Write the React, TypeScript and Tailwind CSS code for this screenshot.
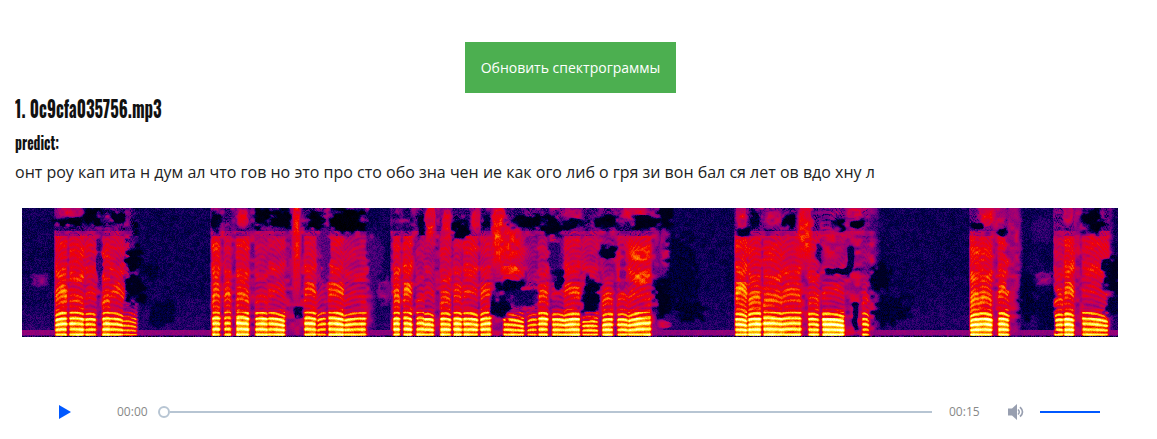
import { useLayoutEffect, useRef } from 'react';

const WIDTH = 1096;
const HEIGHT = 129;

// Voiced slices: start, end, low / mid / high band energy, pitch start, pitch end
type Voice = [number, number, number, number, number, number, number];
const VOICES: Voice[] = [
  [33, 44, 0.8, 0.64, 0.58, 4.8, 5.5],
  [47, 61, 0.78, 0.57, 0.58, 5.6, 5.2],
  [63, 73, 0.74, 0.52, 0.52, 5.1, 5],
  [80, 88, 0.78, 0.6, 0.56, 5.3, 5.5],
  [88, 101, 0.74, 0.55, 0.52, 5.5, 4.6],
  [101, 114, 0.64, 0.34, 0.3, 4.6, 3.8],
  [190, 197, 0.8, 0.64, 0.6, 5.5, 5.5],
  [202, 208, 0.75, 0.6, 0.54, 5.6, 5.7],
  [214, 226, 0.82, 0.6, 0.57, 5.9, 5.4],
  [233, 245, 0.8, 0.5, 0.48, 5.4, 5.3],
  [246, 262, 0.78, 0.52, 0.5, 5.6, 4.6],
  [282, 293, 0.79, 0.58, 0.54, 5.7, 5.3],
  [295, 303, 0.69, 0.42, 0.38, 4.7, 5.5],
  [306, 321, 0.8, 0.59, 0.53, 5.7, 5],
  [322, 343, 0.74, 0.48, 0.48, 4.8, 5.5],
  [371, 377, 0.79, 0.64, 0.57, 5.4, 5.4],
  [381, 389, 0.79, 0.62, 0.57, 5.7, 5.2],
  [394, 402, 0.77, 0.5, 0.46, 5.6, 5.6],
  [402, 411, 0.77, 0.48, 0.46, 5.2, 4.8],
  [418, 428, 0.79, 0.58, 0.53, 5.3, 5],
  [431, 439, 0.79, 0.56, 0.5, 5.5, 5.2],
  [441, 455, 0.78, 0.54, 0.55, 5.4, 4.9],
  [458, 468, 0.79, 0.59, 0.51, 5, 5.7],
  [481, 501, 0.73, 0.3, 0.5, 5.2, 4.2],
  [505, 514, 0.67, 0.3, 0.4, 4.5, 5],
  [516, 525, 0.78, 0.58, 0.48, 5.4, 5.2],
  [530, 542, 0.76, 0.46, 0.34, 5.1, 4.7],
  [542, 557, 0.79, 0.57, 0.52, 4.8, 5.2],
  [560, 575, 0.72, 0.2, 0.48, 4.3, 4.3],
  [580, 590, 0.78, 0.56, 0.42, 4.8, 5.1],
  [595, 605, 0.75, 0.52, 0.52, 5, 4.8],
  [606, 628, 0.79, 0.53, 0.58, 4.6, 6],
  [713, 724, 0.82, 0.68, 0.59, 5.2, 4.6],
  [726, 738, 0.84, 0.63, 0.57, 5, 5.3],
  [741, 760, 0.82, 0.6, 0.56, 5.8, 5.2],
  [760, 778, 0.79, 0.58, 0.54, 5.4, 5.6],
  [786, 796, 0.78, 0.57, 0.53, 5.2, 4.9],
  [800, 821, 0.85, 0.51, 0.44, 5.2, 4.6],
  [840, 846, 0.72, 0.53, 0.4, 5.3, 4.8],
  [948, 957, 0.83, 0.66, 0.6, 4.6, 5.1],
  [957, 969, 0.83, 0.63, 0.59, 5.3, 4.9],
  [976, 986, 0.8, 0.6, 0.57, 5.4, 4.8],
  [1032, 1040, 0.76, 0.58, 0.5, 4.6, 5],
  [1042, 1051, 0.82, 0.63, 0.59, 5.2, 4.8],
  [1060, 1085, 0.75, 0.5, 0.54, 5.6, 4.4],
];

// Background energy of each phrase: start, end, level, fade-out length
const PHRASES = [
  [33, 104, 0.41, 12],
  [189, 344, 0.4, 12],
  [369, 631, 0.39, 16],
  [713, 848, 0.42, 12],
  [948, 990, 0.44, 12],
  [1032, 1085, 0.42, 8],
];

// Soft patches: centre x, centre y, radius x, radius y, target level
const PATCHES = [
  [48, 3, 14, 6, 0.47], [47, 13, 13, 4, 0.02], [70, 8, 9, 9, 0.02], [95, 9, 7, 7, 0.04],
  [77, 58, 3, 24, 0.2], [112, 52, 8, 14, 0.02], [113, 81, 9, 14, 0.03], [17, 72, 8, 7, 0.32],
  [125, 61, 10, 9, 0.08], [138, 105, 12, 12, 0.08],
  [194, 14, 5, 8, 0.04], [240, 9, 7, 11, 0.01], [260, 10, 9, 10, 0.01], [294, 13, 9, 8, 0.01],
  [324, 10, 18, 12, 0], [352, 12, 7, 16, 0.12], [275, 103, 4, 6, 0.08], [220, 9, 6, 9, 0.56],
  [274, 22, 4, 64, 0.57], [303, 45, 5, 25, 0.26], [361, 82, 7, 12, 0.38], [353, 52, 8, 25, 0.23],
  [399, 19, 4, 10, 0.05], [408, 12, 5, 19, 0.6], [424, 16, 5, 18, 0.55], [439, 21, 9, 9, 0.02],
  [453, 12, 5, 12, 0.54], [464, 14, 4, 7, 0.06], [476, 26, 7, 36, 0.61], [489, 34, 10, 22, 0.56],
  [489, 61, 10, 5, 0.64], [505, 13, 15, 6, 0.02], [529, 16, 10, 10, 0.02], [550, 15, 8, 5, 0.03],
  [488, 77, 15, 6, 0.05], [478, 99, 10, 10, 0.05], [500, 89, 15, 8, 0.14], [532, 48, 7, 16, 0.19],
  [537, 71, 5, 11, 0.08], [550, 8, 10, 8, 0.48], [549, 15, 11, 5, 0.04], [583, 14, 12, 8, 0.02],
  [568, 89, 9, 17, 0.04], [586, 43, 8, 6, 0.03], [600, 65, 3, 20, 0.35],
  [612, 5, 14, 7, 0.53], [627, 14, 15, 7, 0.02], [643, 8, 6, 16, 0.03], [643, 42, 5, 21, 0.45],
  [642, 88, 9, 17, 0.03], [642, 116, 6, 4, 0.5], [617, 47, 10, 7, 0.65], [619, 70, 8, 7, 0.65],
  [660, 65, 14, 38, 0.08], [668, 102, 16, 9, 0.06],
  [719, 9, 5, 12, 0.53], [722, 23, 6, 4, 0.04], [732, 11, 4, 8, 0.06], [751, 10, 9, 8, 0.48],
  [767, 12, 7, 7, 0.02], [782, 25, 8, 29, 0.59], [797, 44, 4, 9, 0.13], [816, 18, 7, 6, 0.01],
  [834, 16, 7, 5, 0.01], [832, 4, 8, 5, 0.52], [809, 36, 9, 18, 0.48], [818, 63, 16, 3, 0.05],
  [828, 52, 3, 13, 0.09], [833, 108, 3, 17, 0.08], [858, 70, 9, 14, 0.05], [870, 101, 20, 14, 0.07],
  [965, 8, 8, 10, 0.56], [954, 17, 6, 3, 0.04], [982, 23, 6, 4, 0.04], [978, 7, 5, 11, 0.47],
  [991, 45, 7, 51, 0.43], [1020, 70, 10, 7, 0.36], [1020, 20, 10, 12, 0.2], [1005, 90, 8, 26, 0.08],
  [1023, 105, 9, 22, 0.1], [1046, 6, 5, 10, 0.52], [1056, 11, 5, 10, 0.42], [1070, 10, 10, 13, 0.02],
  [1088, 67, 8, 17, 0.04], [1089, 96, 7, 10, 0.08],
];

const clamp = (v: number) => Math.max(0, Math.min(1, v));
const smooth = (t: number) => {
  const c = clamp(t);
  return c * c * (3 - 2 * c);
};

function hash(x: number, y: number) {
  let n = Math.imul(x + 101, 374761393) ^ Math.imul(y + 57, 668265263);
  n = Math.imul(n ^ (n >>> 13), 1274126177);
  return ((n ^ (n >>> 16)) >>> 0) / 4294967295;
}

function field(x: number, y: number) {
  const ix = Math.floor(x);
  const iy = Math.floor(y);
  const u = smooth(x - ix);
  const w = smooth(y - iy);
  const top = hash(ix, iy) * (1 - u) + hash(ix + 1, iy) * u;
  const bottom = hash(ix, iy + 1) * (1 - u) + hash(ix + 1, iy + 1) * u;
  return top * (1 - w) + bottom * w;
}

const bump = (h: number, centre: number, width: number) =>
  Math.exp(-(((h - centre) / width) ** 2));

function energy(x: number, y: number) {
  const h = 126 - y;
  const grain = hash(x, y) - 0.5;
  const cloud = field(x / 5, y / 4 + 40) - 0.5;
  let v = 0.135 + 0.04 * smooth((y - 75) / 40) + cloud * 0.05;

  for (const [a, b, level, fade] of PHRASES) {
    if (x < a - 2 || x > b + fade) continue;
    const edge = smooth((x - a + 2) / 2) * (1 - smooth((x - b) / fade));
    const ceiling = y < 23 ? -0.08 : 0;
    v += (level + ceiling + cloud * 0.25 - v) * edge;
  }

  for (const [a, b, low, mid, high, p0, p1] of VOICES) {
    if (x < a - 3 || x > b + 3) continue;
    const t = clamp((x - a) / (b - a));
    const edge = smooth((x - a + 2) / 3) * (1 - smooth((x - b + 1) / 4));
    const shift = Math.sin(a * 2.1) * 5;
    const rise = Math.sin(t * 3) * 5;
    let level =
      h < 23
        ? low
        : h < 53
          ? mid - 0.07 + 0.12 * bump(h, 36 + shift + rise, 8)
          : high - 0.06 + 0.1 * bump(h, 64 + shift - rise, 7) + 0.06 * bump(h, 86 + shift, 9);
    if (h >= 17 && h < 26) level += ((mid + low) / 2 - 0.06 - level) * 0.65;
    if (h > 98) level *= 0.45 + cloud * 0.6;
    const pitch = p0 + (p1 - p0) * t + 0.25 * Math.sin(t * Math.PI);
    const wave = Math.cos((h / pitch) * Math.PI * 2 + 0.5);
    const depth = h < 23 ? 0.13 : h < 53 ? 0.055 : 0.035;
    const target = level + wave * depth + cloud * 0.09;
    if (target > v - 0.15) v += (target - v) * edge;
  }

  for (const [cx, cy, rx, ry, level] of PATCHES) {
    const dx = Math.abs(x - cx) / rx;
    const dy = Math.abs(y - cy) / ry;
    if (dx > 1.7 || dy > 1.7) continue;
    const d = (dx ** 3 + dy ** 3) ** (1 / 3) + cloud * 0.85;
    const mix = 1 - smooth((d - 0.65) / 0.65);
    const rough = level > 0.3 ? cloud * 0.2 : 0;
    v += (level + rough - v) * mix * 0.94;
  }

  if (y > 121) v = Math.max(v, 0.36 + 0.03 * cloud);
  if (y === 127) v -= 0.1;
  if (y === 128) v = 0.13 + grain * 0.24;
  return clamp(v + grain * (v > 0.06 && v < 0.3 ? 0.115 : v < 0.06 ? 0.035 : 0.055));
}

function colour(v: number): [number, number, number] {
  const quarter = Math.PI / 2;
  const r = v < 0.13 ? 0 : v < 0.73 ? Math.sin(((v - 0.13) / 0.6) * quarter) : 1;
  const g = v < 0.6 ? 0 : v < 0.91 ? Math.sin(((v - 0.6) / 0.31) * quarter) : 1;
  const b = v < 0.6 ? 0.5 * Math.sin((v / 0.6) * Math.PI) : v < 0.78 ? 0 : (v - 0.78) / 0.22;
  return [r * 255, g * 255, b * 255];
}

function Spectrogram() {
  const ref = useRef<HTMLCanvasElement>(null);

  useLayoutEffect(() => {
    const ctx = ref.current?.getContext('2d');
    if (!ctx) return;
    const image = ctx.createImageData(WIDTH, HEIGHT);
    for (let y = 0; y < HEIGHT; y++) {
      for (let x = 0; x < WIDTH; x++) {
        const [r, g, b] = colour(energy(x, y));
        const i = (y * WIDTH + x) * 4;
        image.data[i] = r;
        image.data[i + 1] = g;
        image.data[i + 2] = b;
        image.data[i + 3] = 255;
      }
    }
    ctx.putImageData(image, 0, 0);
  }, []);

  return <canvas ref={ref} width={WIDTH} height={HEIGHT} className="block h-[129px] w-[1096px]" />;
}

function Player() {
  return (
    <div className="flex h-6 items-center pl-[59px] text-xs text-[#888]">
      <button aria-label="Play" className="mr-[46px] w-3">
        <svg width="12" height="14" viewBox="0 0 12 14" className="block">
          <path d="M0 0L12 7L0 14Z" fill="#0058ff" />
        </svg>
      </button>
      <span className="w-[41px]">00:00</span>
      <div className="flex w-[774px] items-center">
        <div className="size-3 shrink-0 rounded-full border-2 border-[#b7c5d3]" />
        <div className="h-0.5 grow bg-[#b7c5d3]" />
      </div>
      <span className="ml-[17px] w-[59px]">00:15</span>
      <svg width="16" height="16" viewBox="0 0 16 16" className="block">
        <path d="M0 4.5H4L9 0V16L4 11.5H0Z" fill="#989fb0" />
        <path d="M10 5.5Q12.5 8 10 10.5" fill="none" stroke="#989fb0" strokeWidth="1.5" />
        <path d="M12 3.2Q17 8 12 12.5" fill="none" stroke="#989fb0" strokeWidth="1.7" />
      </svg>
      <div className="ml-4 h-0.5 w-[60px] bg-[#0058ff]" />
    </div>
  );
}

export default function App() {
  return (
    <main className="h-[439px] w-[1157px] overflow-hidden bg-white pt-[42px] font-['Open_Sans','Noto_Sans',sans-serif] text-[#222]">
      <button className="ml-[465px] block h-[51px] w-[211px] whitespace-nowrap bg-[#4caf50] text-sm text-white">
        Обновить спектрограммы
      </button>
      <h3 className="ml-[15px] flex h-[30px] w-[168px] items-center whitespace-nowrap font-['Oswald','Roboto',sans-serif] text-[23px] font-bold text-[#111]">
        <span className="origin-left scale-x-[0.73]">1. 0c9cfa035756.mp3</span>
      </h3>
      <h4 className="ml-[15px] mt-[5px] flex h-7 w-[49px] items-center whitespace-nowrap font-['Oswald','Roboto',sans-serif] text-[18px] font-bold text-[#111]">
        <span className="origin-left scale-x-[0.76]">predict:</span>
      </h4>
      <p className="ml-[15px] mt-1 h-6 whitespace-nowrap text-base leading-6">
        онт роу кап ита н дум ал что гов но это про сто обо зна чен ие как ого либ о гря зи вон бал ся лет ов вдо хну л
      </p>
      <div className="ml-[22px] mt-6">
        <Spectrogram />
      </div>
      <div className="mt-[63px]">
        <Player />
      </div>
    </main>
  );
}
